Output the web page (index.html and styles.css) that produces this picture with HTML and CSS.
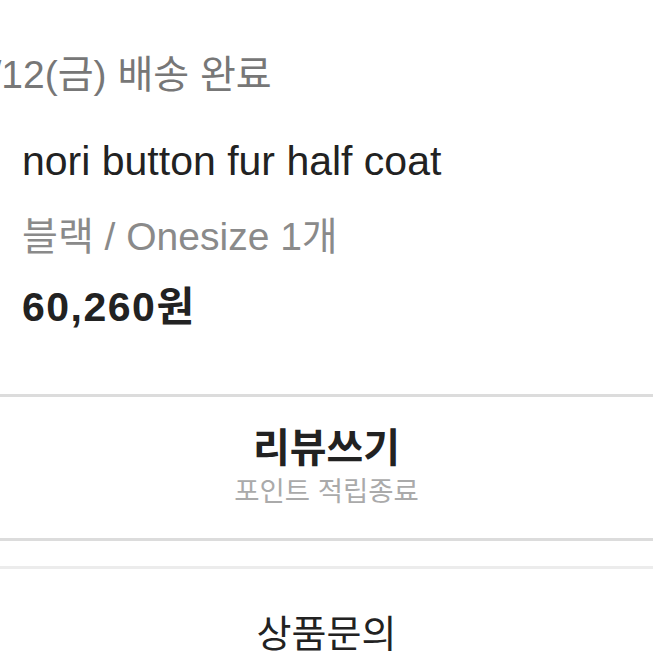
FILE: index.html
```html
<!DOCTYPE html>
<html lang="ko">
<head>
<meta charset="utf-8">
<link rel="stylesheet" href="styles.css">
</head>
<body>
<div class="page">
  <section class="order">
    <div class="status">11/12(금) 배송 완료</div>
    <div class="item">
      <div class="name">nori button fur half coat</div>
      <div class="option">블랙 / Onesize 1개</div>
      <div class="price">60,260원</div>
    </div>
  </section>
  <div class="action review">
    <div class="action-title">리뷰쓰기</div>
    <div class="action-sub">포인트 적립종료</div>
  </div>
  <div class="gap"></div>
  <div class="action inquiry">
    <div class="action-title light">상품문의</div>
  </div>
</div>
</body>
</html>
```
FILE: styles.css
```css
html, body {
  margin: 0;
  padding: 0;
  background: #fff;
}
body {
  font-family: "Liberation Sans", "Noto Sans CJK KR", sans-serif;
  overflow: hidden;
}
.page {
  width: 653px;
  height: 653px;
  overflow: hidden;
}
.order {
  padding-top: 52px;
  height: 397px;
  box-sizing: border-box;
  border-bottom: 3px solid #dcdcdc;
}
.status {
  margin-left: -50px;
  font-size: 39px;
  line-height: 46px;
  color: #777;
  white-space: nowrap;
}
.item {
  padding-left: 22px;
  margin-top: 40px;
}
.name {
  font-size: 41px;
  line-height: 46px;
  color: #222;
}
.option {
  margin-top: 30px;
  font-size: 39px;
  line-height: 46px;
  color: #8a8a8a;
}
.price {
  margin-top: 24px;
  font-size: 41px;
  line-height: 46px;
  font-weight: bold;
  letter-spacing: 1.5px;
  color: #222;
}
.action {
  display: flex;
  flex-direction: column;
  align-items: center;
}
.review {
  height: 144px;
  padding-top: 26px;
  box-sizing: border-box;
  border-bottom: 3px solid #dcdcdc;
}
.action-title {
  font-size: 40px;
  line-height: 50px;
  font-weight: bold;
  color: #222;
}
.action-title.light {
  font-weight: normal;
  font-size: 38px;
}
.action-sub {
  margin-top: 2px;
  font-size: 27.5px;
  line-height: 34px;
  color: #aaa;
}
.gap {
  height: 28px;
  box-sizing: border-box;
  border-bottom: 3px solid #ececec;
}
.inquiry {
  padding-top: 40px;
}
```
